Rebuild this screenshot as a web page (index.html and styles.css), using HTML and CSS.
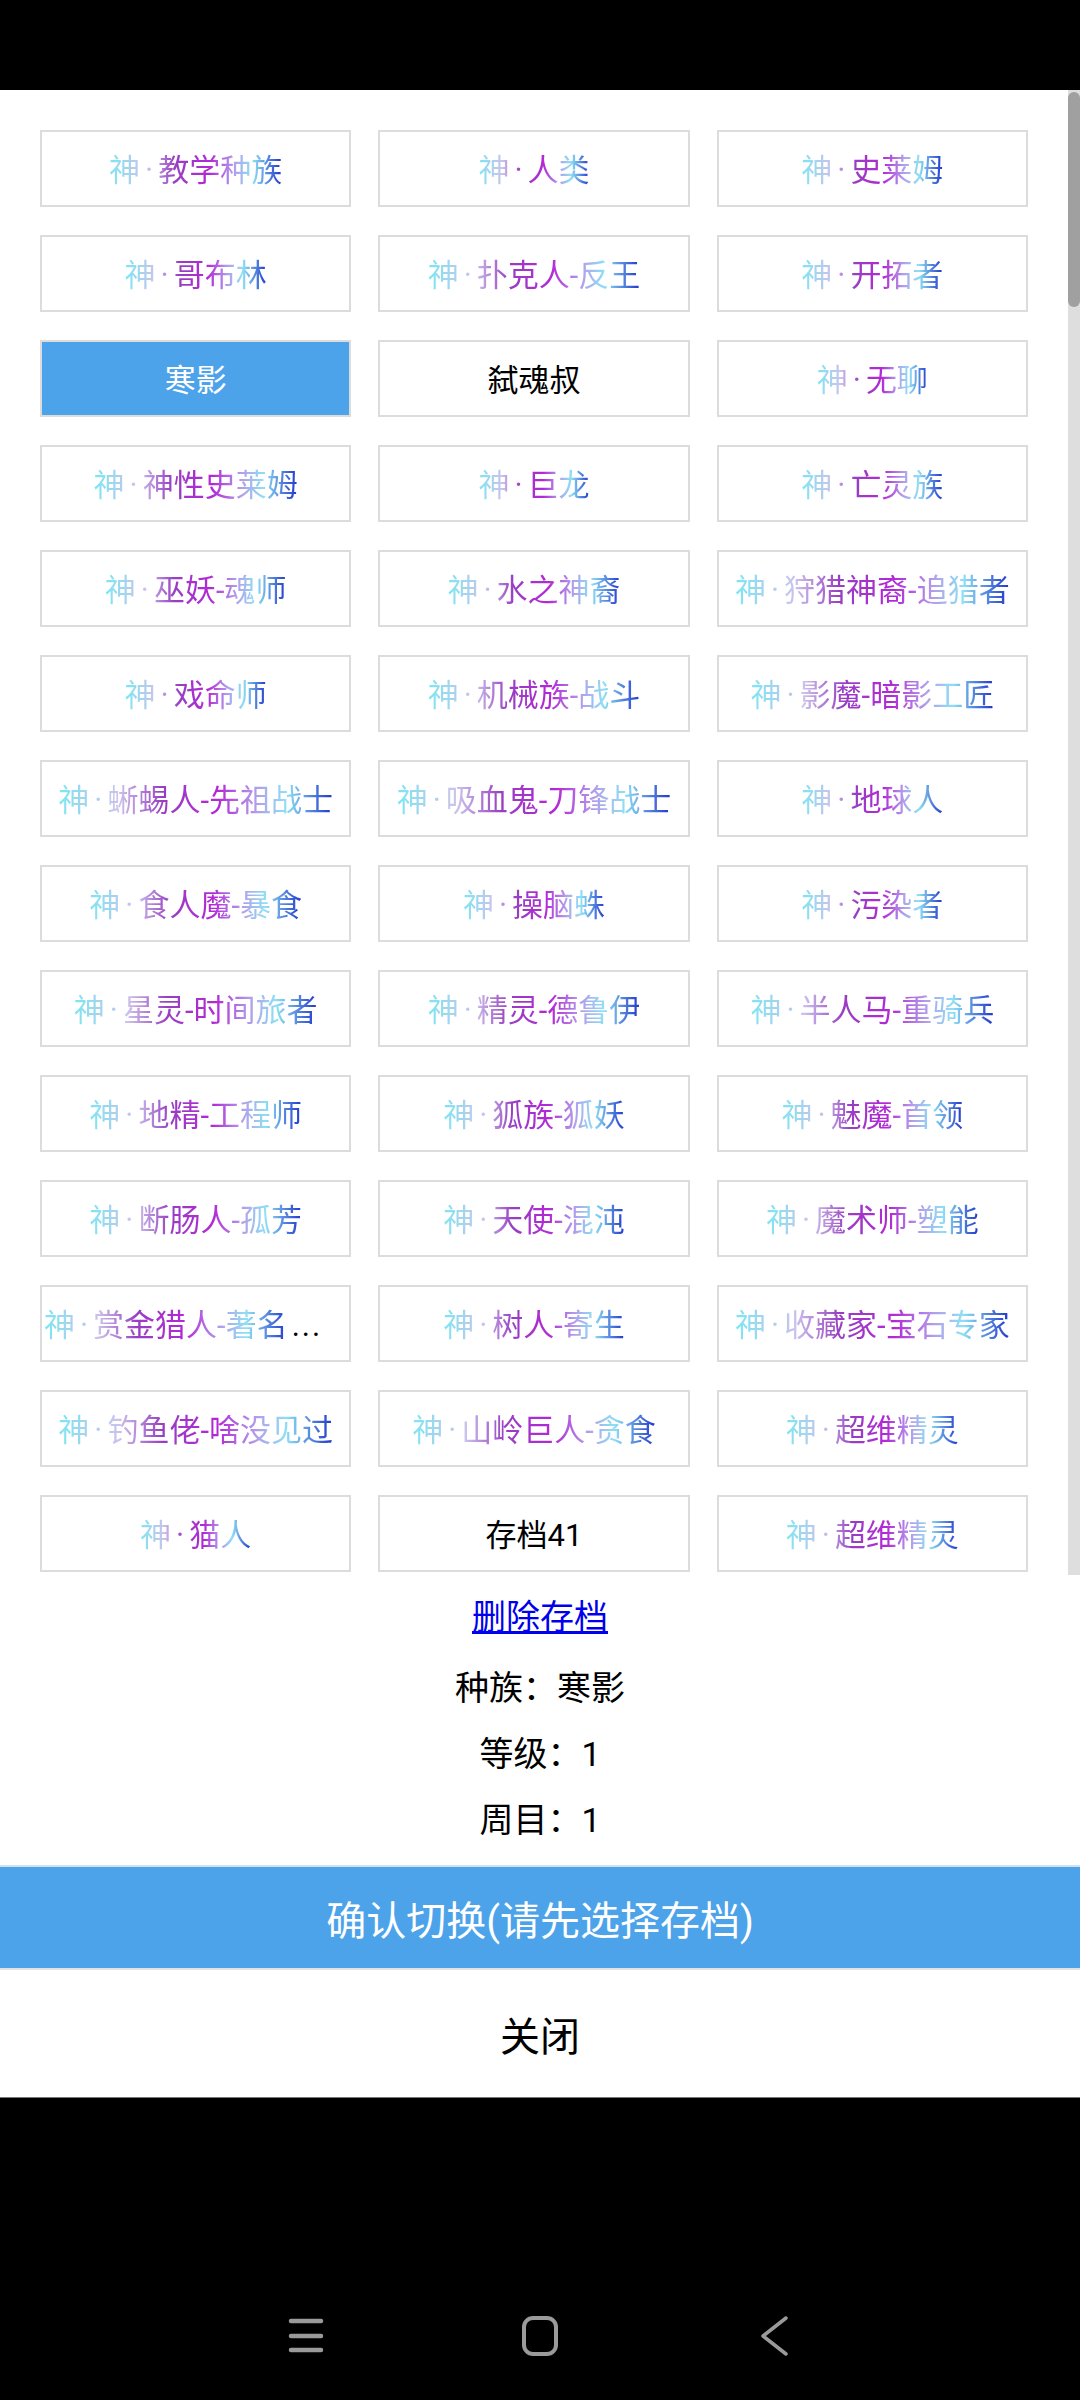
FILE: index.html
```html
<!DOCTYPE html>
<html>
<head>
<meta charset="utf-8">
<meta name="viewport" content="width=device-width, initial-scale=1.0">
<title>切换存档</title>
<link rel="stylesheet" href="styles.css">
</head>
<body class="body">

<div class="statusBar"></div>

<div class="dialog">
	<div class="saveList">
		<div class="saveGrid">
			<div class="save"><span class="god">神<span class="dot">·</span>教学种族</span></div>
			<div class="save"><span class="god">神<span class="dot">·</span>人类</span></div>
			<div class="save"><span class="god">神<span class="dot">·</span>史莱姆</span></div>

			<div class="save"><span class="god">神<span class="dot">·</span>哥布林</span></div>
			<div class="save"><span class="god">神<span class="dot">·</span>扑克人-反王</span></div>
			<div class="save"><span class="god">神<span class="dot">·</span>开拓者</span></div>

			<div class="save active">寒影</div>
			<div class="save">弑魂叔</div>
			<div class="save"><span class="god">神<span class="dot">·</span>无聊</span></div>

			<div class="save"><span class="god">神<span class="dot">·</span>神性史莱姆</span></div>
			<div class="save"><span class="god">神<span class="dot">·</span>巨龙</span></div>
			<div class="save"><span class="god">神<span class="dot">·</span>亡灵族</span></div>

			<div class="save"><span class="god">神<span class="dot">·</span>巫妖-魂师</span></div>
			<div class="save"><span class="god">神<span class="dot">·</span>水之神裔</span></div>
			<div class="save"><span class="god">神<span class="dot">·</span>狩猎神裔-追猎者</span></div>

			<div class="save"><span class="god">神<span class="dot">·</span>戏命师</span></div>
			<div class="save"><span class="god">神<span class="dot">·</span>机械族-战斗</span></div>
			<div class="save"><span class="god">神<span class="dot">·</span>影魔-暗影工匠</span></div>

			<div class="save"><span class="god">神<span class="dot">·</span>蜥蜴人-先祖战士</span></div>
			<div class="save"><span class="god">神<span class="dot">·</span>吸血鬼-刀锋战士</span></div>
			<div class="save"><span class="god">神<span class="dot">·</span>地球人</span></div>

			<div class="save"><span class="god">神<span class="dot">·</span>食人魔-暴食</span></div>
			<div class="save"><span class="god">神<span class="dot">·</span>操脑蛛</span></div>
			<div class="save"><span class="god">神<span class="dot">·</span>污染者</span></div>

			<div class="save"><span class="god">神<span class="dot">·</span>星灵-时间旅者</span></div>
			<div class="save"><span class="god">神<span class="dot">·</span>精灵-德鲁伊</span></div>
			<div class="save"><span class="god">神<span class="dot">·</span>半人马-重骑兵</span></div>

			<div class="save"><span class="god">神<span class="dot">·</span>地精-工程师</span></div>
			<div class="save"><span class="god">神<span class="dot">·</span>狐族-狐妖</span></div>
			<div class="save"><span class="god">神<span class="dot">·</span>魅魔-首领</span></div>

			<div class="save"><span class="god">神<span class="dot">·</span>断肠人-孤芳</span></div>
			<div class="save"><span class="god">神<span class="dot">·</span>天使-混沌</span></div>
			<div class="save"><span class="god">神<span class="dot">·</span>魔术师-塑能</span></div>

			<div class="save cut"><span class="god">神<span class="dot">·</span>赏金猎人-著名</span><span class="more">...</span></div>
			<div class="save"><span class="god">神<span class="dot">·</span>树人-寄生</span></div>
			<div class="save"><span class="god">神<span class="dot">·</span>收藏家-宝石专家</span></div>

			<div class="save"><span class="god">神<span class="dot">·</span>钓鱼佬-啥没见过</span></div>
			<div class="save"><span class="god">神<span class="dot">·</span>山岭巨人-贪食</span></div>
			<div class="save"><span class="god">神<span class="dot">·</span>超维精灵</span></div>

			<div class="save"><span class="god">神<span class="dot">·</span>猫人</span></div>
			<div class="save">存档41</div>
			<div class="save"><span class="god">神<span class="dot">·</span>超维精灵</span></div>
		</div>
		<!-- полоса прокрутки -->
		<div class="scrollTrack"><div class="scrollThumb"></div></div>
	</div>

	<div class="info">
		<a href="#" class="delLink">删除存档</a>
		<div class="infoLine first">种族：寒影</div>
		<div class="infoLine">等级：1</div>
		<div class="infoLine">周目：1</div>
	</div>

	<button class="confirm">确认切换(请先选择存档)</button>
	<button class="close">关闭</button>
</div>

<div class="navBar">
	<svg class="navIcon" width="40" height="40" viewBox="0 0 40 40">
		<g stroke="#9a9a9a" stroke-width="4.5" stroke-linecap="round">
			<line x1="5" y1="5" x2="35" y2="5"/>
			<line x1="5" y1="20" x2="35" y2="20"/>
			<line x1="5" y1="34" x2="35" y2="34"/>
		</g>
	</svg>
	<svg class="navIcon" width="40" height="40" viewBox="0 0 40 40">
		<rect x="4" y="2" width="32" height="36" rx="9" fill="none" stroke="#9a9a9a" stroke-width="4"/>
	</svg>
	<svg class="navIcon" width="40" height="40" viewBox="0 0 40 40">
		<polyline points="32,2 9,20 32,38" fill="none" stroke="#9a9a9a" stroke-width="3.5" stroke-linecap="round" stroke-linejoin="round"/>
	</svg>
</div>

</body>
</html>
```
FILE: styles.css
```css
html,
body {
	margin: 0;
	background: #000;
	font-family: Roboto, "Noto Sans CJK SC", sans-serif;
}

.body {
	width: 1080px;
	height: 2400px;
	overflow: hidden;
	display: flex;
	flex-direction: column;
}

.statusBar {
	height: 90px;
	flex: none;
}

.dialog {
	background: #fff;
	display: flex;
	flex-direction: column;
	border-bottom: 1px solid #777;
	flex: none;
}

.saveList {
	height: 1485px;
	overflow: hidden;
	display: flex;
}

.saveGrid {
	flex: 1;
	display: grid;
	grid-template-columns: repeat(3, 1fr);
	grid-auto-rows: 77px;
	column-gap: 27px;
	row-gap: 28px;
	padding: 40px 40px 0 40px;
}

.scrollTrack {
	flex: none;
	width: 12px;
	background: #dedede;
}
.scrollThumb {
	height: 215px;
	margin-top: 2px;
	background: #a0a0a0;
	border-radius: 6px;
}

.save {
	box-sizing: border-box;
	height: 77px;
	border: 2px solid #dcdcdc;
	line-height: 77px;
	text-align: center;
	font-size: 31px;
	color: #000;
	white-space: nowrap;
	overflow: hidden;
	background: #fff;
}

.active {
	background: #4da3e9;
	color: #fff;
}

.cut {
	text-align: left;
	padding-left: 2px;
}

.god {
	background: linear-gradient(90deg,
		#7ce6f2 0%,
		#cbc2ec 22%,
		#983ec2 38%,
		#b228d6 58%,
		#b29ceb 72%,
		#8ee0f4 83%,
		#1f34cc 100%);
	-webkit-background-clip: text;
	background-clip: text;
	color: transparent;
}

.dot {
	margin: 0 5px;
}

.more {
	color: #000;
	letter-spacing: 2px;
	margin-left: 4px;
}

.info {
	display: flex;
	flex-direction: column;
	align-items: center;
	padding: 9px 0 12px 0;
	font-size: 34px;
	color: #000;
}

.delLink {
	color: #0000ee;
	text-decoration: underline;
	line-height: 66px;
}

.infoLine {
	line-height: 66px;
}
.first {
	margin-top: 5px;
}

.confirm,
.close {
	display: block;
	width: 100%;
	margin: 0;
	border: none;
	font-family: Roboto, "Noto Sans CJK SC", sans-serif;
	font-size: 40px;
	cursor: pointer;
}

.confirm {
	height: 105px;
	background: #4da3e9;
	color: #fff;
	border-top: 2px solid #cfe2f4;
	border-bottom: 2px solid #e2e2e2;
}

.close {
	height: 127px;
	background: #fff;
	color: #000;
}

.navBar {
	flex: 1;
	display: flex;
	justify-content: center;
	align-items: flex-end;
	gap: 194px;
	padding-bottom: 44px;
}

.navIcon {
	display: block;
}
```
